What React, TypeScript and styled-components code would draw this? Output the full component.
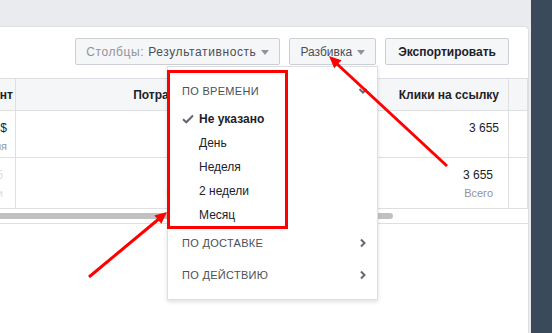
import styled, { createGlobalStyle } from "styled-components";

const GlobalStyle = createGlobalStyle`
    html, body {
        margin: 0;
        padding: 0;
    }
    body {
        font-family: "Liberation Sans", Arial, sans-serif;
        font-size: 12px;
        color: #1d2129;
    }
`;

const border = '#dddfe2';

const Page = styled.div`
    position: relative;
    width: 552px;
    height: 333px;
    overflow: hidden;
    display: flex;
    flex-direction: row;
`;

const Main = styled.div`
    flex: 1;
    min-width: 0;
    background-color: #e9ebee;
    padding: 26px 2px 0 0;
    display: flex;
`;

const SideStrip = styled.div`
    width: 21px;
    background-color: #3b4a5b;
`;

const Card = styled.div`
    flex: 1;
    min-width: 0;
    background-color: #fff;
    border-top: 1px solid ${ border };
    border-right: 1px solid ${ border };
    border-top-right-radius: 5px;
    display: flex;
    flex-direction: column;
`;

const Toolbar = styled.div`
    display: flex;
    justify-content: flex-end;
    gap: 9px;
    padding: 11px 19px 13px 0;
`;

const Button = styled.button<{ $bold?: boolean }>`
    height: 27px;
    padding: 0 ${ p => p.$bold ? '12px' : '10px' };
    display: flex;
    align-items: center;
    gap: 5px;
    background-color: #f5f6f7;
    border: 1px solid #ccd0d5;
    border-radius: 2px;
    font-family: inherit;
    font-size: 12px;
    font-weight: ${ p => p.$bold ? 'bold' : 'normal' };
    color: ${ p => p.$bold ? '#1d2129' : '#4b4f56' };
    cursor: pointer;
`;

const WideLabel = styled.span`
    letter-spacing: 0.6px;
`;

const Muted = styled.span`
    color: #90949c;
`;

const Caret = styled.span`
    width: 0;
    height: 0;
    border-left: 4.5px solid transparent;
    border-right: 4.5px solid transparent;
    border-top: 5px solid #90949c;
    margin-top: 1px;
`;

const Table = styled.div`
    display: grid;
    grid-template-columns: 16px 245px 248px 1fr;
`;

const Cell = styled.div<{ $head?: boolean; $height: number; $pad?: number }>`
    height: ${ p => p.$height }px;
    box-sizing: border-box;
    border-top: 1px solid ${ border };
    border-right: 1px solid ${ border };
    background-color: ${ p => p.$head ? '#f5f6f7' : '#fff' };
    display: flex;
    flex-direction: column;
    align-items: flex-end;
    justify-content: ${ p => p.$head ? 'center' : 'flex-start' };
    padding: ${ p => p.$head ? '0' : '9px' } ${ p => p.$pad ?? 9 }px 0 0;
    overflow: hidden;
    white-space: nowrap;
    font-weight: ${ p => p.$head ? 'bold' : 'normal' };
    font-size: 12px;
    color: ${ p => p.$head ? '#1d2129' : '#4b4f56' };
    line-height: 16px;
`;

const Sub = styled.span<{ $faint?: boolean }>`
    font-size: 11px;
    color: ${ p => p.$faint ? '#dadde1' : '#90949c' };
    line-height: 14px;
    margin-top: 3px;
`;

const Value = styled.span<{ $faint?: boolean }>`
    color: ${ p => p.$faint ? '#dadde1' : '#1d2129' };
`;

const ScrollTrack = styled.div`
    height: 16px;
    box-sizing: border-box;
    border-top: 1px solid ${ border };
    border-bottom: 1px solid ${ border };
    padding-top: 4px;
`;

const ScrollThumb = styled.div`
    width: 393px;
    height: 6px;
    background-color: #c1c1c1;
    border-radius: 0 3px 3px 0;
`;

const Menu = styled.div`
    position: absolute;
    left: 167px;
    top: 66px;
    width: 211px;
    box-sizing: border-box;
    padding: 8px 0;
    background-color: #fff;
    border: 1px solid ${ border };
    box-shadow: 0 2px 4px rgba(0, 0, 0, 0.12);
`;

const SectionRow = styled.div`
    height: 32px;
    display: flex;
    align-items: center;
    justify-content: space-between;
    padding: 0 9px 0 14px;
    font-size: 11px;
    letter-spacing: 0.3px;
    color: #4b4f56;
    text-transform: uppercase;
`;

const Option = styled.div<{ $active?: boolean }>`
    height: 24px;
    display: flex;
    align-items: center;
    padding-left: 14px;
    font-size: 12px;
    font-weight: ${ p => p.$active ? 'bold' : 'normal' };
    color: #1d2129;
`;

const CheckSlot = styled.span`
    width: 17px;
    display: flex;
    align-items: center;
`;

const Annotations = styled.svg`
    position: absolute;
    left: 0;
    top: 0;
    pointer-events: none;
`;

function CheckIcon() {
    return (
        <svg width="12" height="10" viewBox="0 0 12 10">
            <path d="M1 5.2 L4.3 8.3 L11 1.5" fill="none" stroke="#606770" strokeWidth="2" />
        </svg>
    );
}

function Chevron({ down }: { down?: boolean }) {
    return (
        <svg width="10" height="10" viewBox="0 0 10 10">
            <path
                d={ down ? "M1.5 3 L5 6.5 L8.5 3" : "M3 1.5 L6.5 5 L3 8.5" }
                fill="none"
                stroke="#606770"
                strokeWidth="2"
            />
        </svg>
    );
}

const timeOptions = ["День", "Неделя", "2 недели", "Месяц"];

function App() {
    return (
        <Page>
            <GlobalStyle />
            <Main>
                <Card>
                    <Toolbar>
                        <Button>
                            <WideLabel><Muted>Столбцы:</Muted> Результативность</WideLabel>
                            <Caret />
                        </Button>
                        <Button>
                            Разбивка
                            <Caret />
                        </Button>
                        <Button $bold>Экспортировать</Button>
                    </Toolbar>
                    <Table>
                        <Cell $head $height={ 32 } $pad={ 2 }>Процент</Cell>
                        <Cell $head $height={ 32 }>Потраченная сумма</Cell>
                        <Cell $head $height={ 32 }>Клики на ссылку</Cell>
                        <Cell $head $height={ 32 } />

                        <Cell $height={ 47 } $pad={ 8 }>
                            <Value>0,04 $</Value>
                            <Sub>За транзакция</Sub>
                        </Cell>
                        <Cell $height={ 47 }>
                            <Value>146,20 $</Value>
                        </Cell>
                        <Cell $height={ 47 }>
                            <Value>3 655</Value>
                        </Cell>
                        <Cell $height={ 47 } />

                        <Cell $height={ 51 } $pad={ 12 }>
                            <Value $faint>0,05</Value>
                            <Sub $faint>и</Sub>
                        </Cell>
                        <Cell $height={ 51 }>
                            <Value>146,20 $</Value>
                            <Sub>Всего потрачено</Sub>
                        </Cell>
                        <Cell $height={ 51 } $pad={ 15 }>
                            <Value>3 655</Value>
                            <Sub>Всего</Sub>
                        </Cell>
                        <Cell $height={ 51 } />
                    </Table>
                    <ScrollTrack>
                        <ScrollThumb />
                    </ScrollTrack>
                </Card>
            </Main>
            <SideStrip />

            <Menu>
                <SectionRow>
                    По времени
                    <Chevron down />
                </SectionRow>
                <Option $active>
                    <CheckSlot><CheckIcon /></CheckSlot>
                    Не указано
                </Option>
                { timeOptions.map(label => (
                    <Option key={ label }>
                        <CheckSlot />
                        { label }
                    </Option>
                )) }
                <SectionRow>
                    По доставке
                    <Chevron />
                </SectionRow>
                <SectionRow>
                    По действию
                    <Chevron />
                </SectionRow>
            </Menu>

            <Annotations width="552" height="333" viewBox="0 0 552 333">
                <rect x="168.5" y="71.5" width="118" height="156" fill="none" stroke="#ff0000" strokeWidth="3" />
                <line x1="447" y1="166" x2="336" y2="63" stroke="#ff0000" strokeWidth="3" />
                <polygon points="329,56 341.5,60.3 334.2,68.2" fill="#ff0000" />
                <line x1="89" y1="277" x2="160" y2="218" stroke="#ff0000" strokeWidth="3" />
                <polygon points="167,212 161.3,223.8 154.4,215.6" fill="#ff0000" />
            </Annotations>
        </Page>
    );
}

export default App;
